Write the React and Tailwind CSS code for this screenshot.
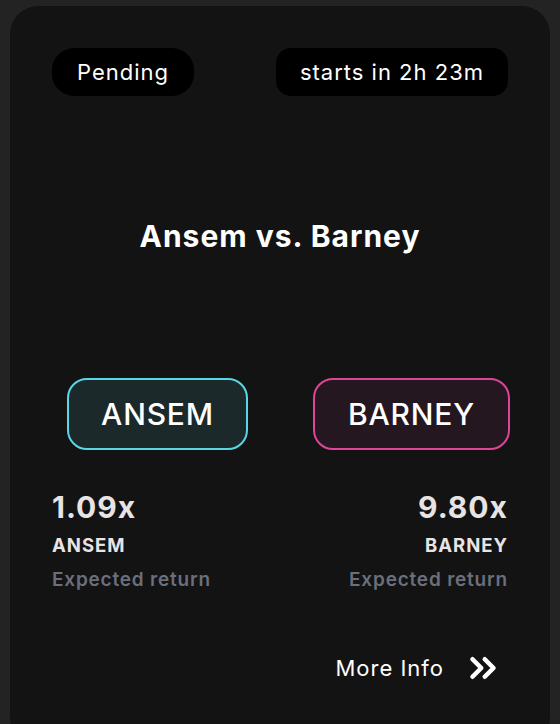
import { ChevronsRight } from "lucide-react";

export default function App() {
  return (
    <div className="min-h-screen bg-[#232323] px-[10px] pt-[6px] font-['Inter',sans-serif]">
      <div className="h-[740px] rounded-[28px] bg-[#131313] px-[42px] pt-[42px] text-white">
        {/* Top pills */}
        <div className="flex items-center justify-between">
          <div className="flex h-[48px] items-center rounded-[22px] bg-black px-[25px] text-[22px] tracking-[1px]">
            Pending
          </div>
          <div className="flex h-[48px] items-center rounded-[15px] bg-black px-[24px] text-[22px] tracking-[1px]">
            starts in 2h 23m
          </div>
        </div>

        <h1 className="mt-[120px] text-center text-[30px] font-bold leading-[40px] tracking-[1px]">
          Ansem vs. Barney
        </h1>

        {/* Side buttons */}
        <div className="mt-[122px] flex items-center justify-between pl-[15px] mr-[-2px]">
          <button className="flex h-[72px] w-[181px] items-center justify-center rounded-[20px] border-2 border-[#5bd6e4] bg-[#1b292a] text-[30px] font-medium tracking-[0.8px]">
            ANSEM
          </button>
          <button className="flex h-[72px] w-[197px] items-center justify-center rounded-[20px] border-2 border-[#df4599] bg-[#241720] text-[30px] font-medium tracking-[0.8px]">
            BARNEY
          </button>
        </div>

        {/* Stats */}
        <div className="mt-[37px] flex justify-between">
          <div>
            <div className="text-[30px] font-bold leading-[40px] tracking-[1px] text-[#e9e4e4]">1.09x</div>
            <div className="mt-[4px] text-[18.5px] font-bold leading-[28px] tracking-[1px] text-[#e9e4e4]">ANSEM</div>
            <div className="mt-[7px] text-[19px] font-semibold leading-[28px] tracking-[0.8px] text-[#6b6f7b]">Expected return</div>
          </div>
          <div className="text-right">
            <div className="text-[30px] font-bold leading-[40px] tracking-[1px] text-[#e9e4e4]">9.80x</div>
            <div className="mt-[4px] text-[18.5px] font-bold leading-[28px] tracking-[1px] text-[#e9e4e4]">BARNEY</div>
            <div className="mt-[7px] text-[19px] font-semibold leading-[28px] tracking-[0.8px] text-[#6b6f7b]">Expected return</div>
          </div>
        </div>

        {/* More info */}
        <div className="mt-[53px] flex items-center justify-end pr-[4px]">
          <span className="text-[22px] leading-[32px] tracking-[1px]">More Info</span>
          <ChevronsRight className="ml-[18px] h-[42px] w-[42px]" strokeWidth={2.6} />
        </div>
      </div>
    </div>
  );
}
